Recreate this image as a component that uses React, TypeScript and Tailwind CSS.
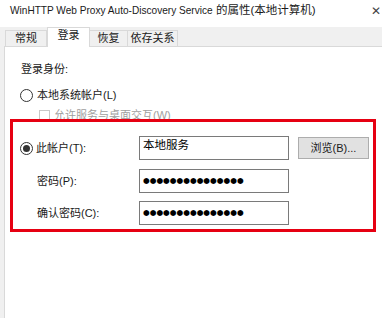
import React from 'react';

const font = { fontFamily: '"Liberation Sans", "Noto Sans CJK SC", sans-serif' };

function Radio({ checked }: { checked?: boolean }) {
    return (
        <span className="shrink-0 w-[13px] h-[13px] rounded-full border border-[#333] bg-white flex items-center justify-center">
            {checked && <span className="w-[7px] h-[7px] rounded-full bg-[#333]" />}
        </span>
    );
}

function Field({ children, dots }: { children: React.ReactNode; dots?: boolean }) {
    return (
        <div className="w-[150px] h-[24px] border border-[#7a7a7a] bg-white flex items-center px-[3px]">
            {dots ? (
                <span className="text-[7.7px] leading-none text-black" style={{ fontFamily: '"DejaVu Sans", sans-serif' }}>
                    {children}
                </span>
            ) : (
                <span className="text-[11.5px] leading-none text-black -mt-[4px]">{children}</span>
            )}
        </div>
    );
}

export default function App() {
    const pw = '●●●●●●●●●●●●●●●';
    return (
        <div className="w-[382px] h-[318px] bg-[#f0f0f0] overflow-hidden text-[#1a1a1a]" style={font}>
            {/* title bar */}
            <div className="h-[27px] bg-white flex items-center pl-[10px] pr-[1px] text-[11.5px]">
                <span className="flex-1 whitespace-nowrap -mt-[6px]">
                    <span className="text-[10.1px]">WinHTTP Web Proxy Auto-Discovery Service</span> 的属性(本地计算机)
                </span>
                <span className="text-[12px] -mt-[6px] text-[#444] font-light">✕</span>
            </div>

            {/* tabs */}
            <div className="h-[19px] flex items-end pl-[5px] text-[11px] relative z-10">
                <div className="h-[16px] w-[42px] border border-b-0 border-[#d9d9d9] flex items-center justify-center leading-none">常规</div>
                <div className="h-[20px] w-[43px] -mb-[1px] border border-b-0 border-[#d9d9d9] bg-white flex items-start pt-[2px] justify-center leading-none">登录</div>
                <div className="h-[16px] w-[38px] border border-l-0 border-b-0 border-[#d9d9d9] flex items-center justify-center leading-none">恢复</div>
                <div className="h-[16px] w-[50px] border border-l-0 border-b-0 border-[#d9d9d9] flex items-center justify-center leading-none">依存关系</div>
            </div>

            {/* panel */}
            <div className="ml-[4px] h-[300px] bg-white border border-r-0 border-[#d9d9d9] text-[11px] leading-[16px]">
                <div className="pl-[16px] pt-[14px]">登录身份:</div>
                <div className="pl-[15px] mt-[10px] flex items-center gap-[4px]">
                    <Radio />
                    <span>本地系统帐户(L)</span>
                </div>
                <div className="pl-[34px] mt-[4px] flex items-center gap-[4px] text-[#a0a0a0]">
                    <span className="w-[11px] h-[11px] border border-[#c8c8c8] bg-white" />
                    <span>允许服务与桌面交互(W)</span>
                </div>

                {/* highlighted account box */}
                <div className="relative ml-[5px] -mt-[4px] w-[366px] h-[113px] border-[3px] border-[#e60012] pt-[14px] pl-[7px]">
                    <div className="flex items-center">
                        <div className="w-[119px] flex items-center gap-[3px]">
                            <Radio checked />
                            <span>此帐户(T):</span>
                        </div>
                        <Field>本地服务</Field>
                        <div className="ml-[9px] w-[71px] h-[22px] border border-[#adadad] bg-[#e1e1e1] flex items-center justify-center leading-none">
                            浏览(B)...
                        </div>
                    </div>
                    <div className="flex items-center mt-[9px]">
                        <div className="w-[119px] pl-[17px]">密码(P):</div>
                        <Field dots>{pw}</Field>
                    </div>
                    <div className="flex items-center mt-[8px]">
                        <div className="w-[119px] pl-[17px]">确认密码(C):</div>
                        <Field dots>{pw}</Field>
                    </div>
                </div>
            </div>
        </div>
    );
}
